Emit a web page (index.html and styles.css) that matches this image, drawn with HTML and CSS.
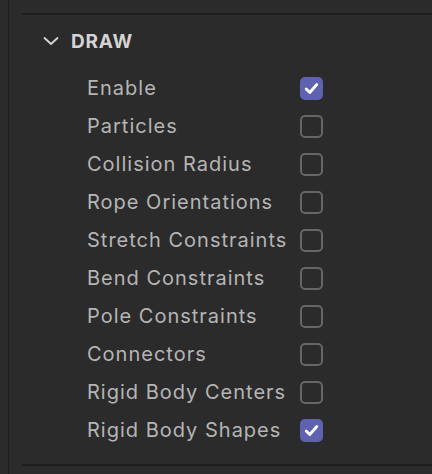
FILE: index.html
```html
<!DOCTYPE html>
<html>
<head>
<meta charset="utf-8">
<link rel="stylesheet" href="styles.css">
</head>
<body>
<div class="panel">
  <div class="divider"></div>
  <div class="section-header">
    <svg class="chevron" width="16" height="8" viewBox="0 0 16 8"><path d="M1.5 1 L8 7 L14.5 1" fill="none" stroke="#d6d6d6" stroke-width="1.8" stroke-linecap="round" stroke-linejoin="round"/></svg>
    <span class="section-title">DRAW</span>
  </div>
  <div class="rows">
    <div class="row"><span class="label">Enable</span><span class="box checked"><svg width="15" height="13" viewBox="0 0 15 13"><path d="M2.2 7 L5.8 10.5 L12.8 2.5" fill="none" stroke="#fff" stroke-width="2.8" stroke-linecap="round" stroke-linejoin="round"/></svg></span></div>
    <div class="row"><span class="label">Particles</span><span class="box"></span></div>
    <div class="row"><span class="label">Collision Radius</span><span class="box"></span></div>
    <div class="row"><span class="label">Rope Orientations</span><span class="box"></span></div>
    <div class="row"><span class="label">Stretch Constraints</span><span class="box"></span></div>
    <div class="row"><span class="label">Bend Constraints</span><span class="box"></span></div>
    <div class="row"><span class="label">Pole Constraints</span><span class="box"></span></div>
    <div class="row"><span class="label">Connectors</span><span class="box"></span></div>
    <div class="row"><span class="label">Rigid Body Centers</span><span class="box"></span></div>
    <div class="row"><span class="label">Rigid Body Shapes</span><span class="box checked"><svg width="15" height="13" viewBox="0 0 15 13"><path d="M2.2 7 L5.8 10.5 L12.8 2.5" fill="none" stroke="#fff" stroke-width="2.8" stroke-linecap="round" stroke-linejoin="round"/></svg></span></div>
  </div>
  <div class="divider bottom"></div>
</div>
</body>
</html>
```
FILE: styles.css
```css
html, body {
  margin: 0;
  padding: 0;
  background: #2b2b2b;
  width: 432px;
  height: 474px;
  overflow: hidden;
  font-family: Inter, "Liberation Sans", sans-serif;
}
.panel {
  margin-left: 8px;
  border-left: 1px solid #1f1f1f;
  height: 474px;
  box-sizing: border-box;
  padding-top: 13px;
}
.divider {
  margin-left: 13px;
  height: 2px;
  background: #1e1e1e;
}
.divider.bottom {
  margin-top: 15px;
}
.section-header {
  display: flex;
  align-items: center;
  height: 26px;
  margin-top: 13px;
  padding-left: 34px;
}
.chevron {
  display: block;
}
.section-title {
  margin-left: 12px;
  font-size: 19px;
  font-weight: 700;
  color: #d4d4d4;
  letter-spacing: 0.8px;
}
.rows {
  margin-top: 15px;
  padding-left: 78px;
}
.row {
  display: grid;
  grid-template-columns: 213px 23px;
  align-items: center;
  height: 38px;
}
.label {
  font-size: 20px;
  color: #b5b5b5;
  letter-spacing: 1px;
  white-space: nowrap;
}
.box {
  width: 23px;
  height: 23px;
  box-sizing: border-box;
  border: 2px solid #666;
  border-radius: 5px;
  display: flex;
  align-items: center;
  justify-content: center;
}
.box.checked {
  background: #5e62b0;
  border-color: #5e62b0;
}
```
